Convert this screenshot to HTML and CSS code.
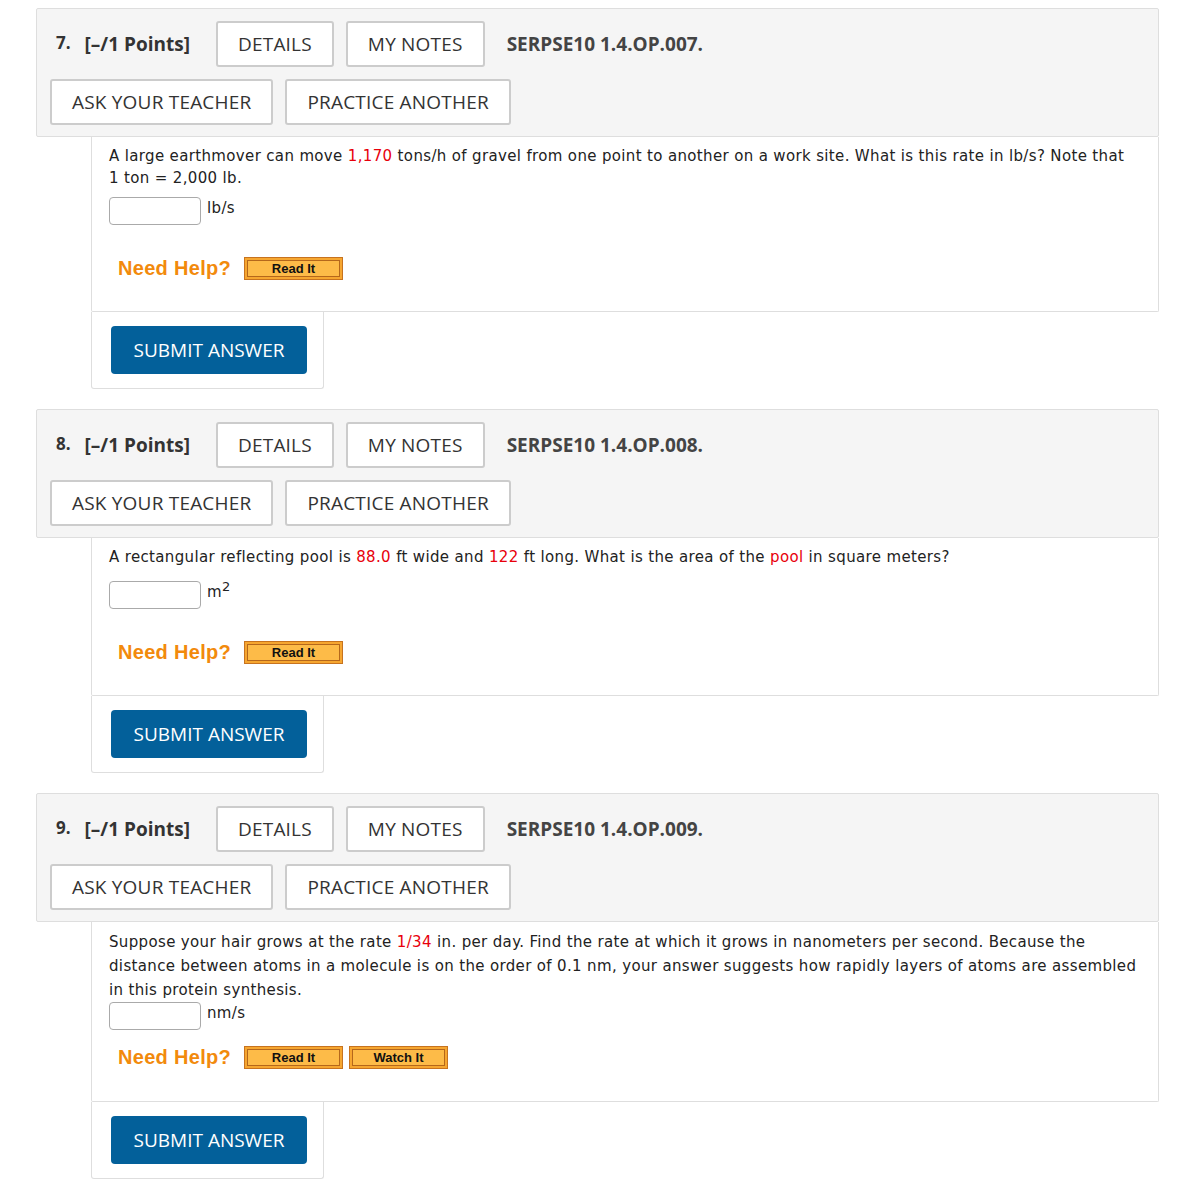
FILE: index.html
```html
<!DOCTYPE html>
<html lang="en">
<head>
  <meta charset="UTF-8" />
  <title>Assignment - Questions 7-9</title>
  <link rel="stylesheet" href="styles.css">
</head>
<body>
  <div class="page">

    <!-- Question 7 -->
    <div class="question">
      <div class="q-header">
        <div class="q-row">
          <span class="q-num">7.</span>
          <span class="q-points">[–/1 Points]</span>
          <button class="hdr-btn first">DETAILS</button>
          <button class="hdr-btn">MY NOTES</button>
          <span class="q-code">SERPSE10 1.4.OP.007.</span>
        </div>
        <div class="q-row">
          <button class="hdr-btn">ASK YOUR TEACHER</button>
          <button class="hdr-btn">PRACTICE ANOTHER</button>
        </div>
      </div>
      <div class="q-body">
        <p class="q-text">A large earthmover can move <span class="val">1,170</span> tons/h of gravel from one point to another on a work site. What is this rate in lb/s? Note that <span class="eq">1 ton = 2,000 lb.</span></p>
        <div class="answer">
          <input type="text" class="ans-input" />
          <span class="unit">lb/s</span>
        </div>
        <div class="help">
          <span class="need-help">Need Help?</span>
          <span class="help-btn"><span>Read It</span></span>
        </div>
      </div>
      <div class="q-submit">
        <button class="submit-btn">SUBMIT ANSWER</button>
      </div>
    </div>

    <!-- Question 8 -->
    <div class="question">
      <div class="q-header">
        <div class="q-row">
          <span class="q-num">8.</span>
          <span class="q-points">[–/1 Points]</span>
          <button class="hdr-btn first">DETAILS</button>
          <button class="hdr-btn">MY NOTES</button>
          <span class="q-code">SERPSE10 1.4.OP.008.</span>
        </div>
        <div class="q-row">
          <button class="hdr-btn">ASK YOUR TEACHER</button>
          <button class="hdr-btn">PRACTICE ANOTHER</button>
        </div>
      </div>
      <div class="q-body">
        <p class="q-text">A rectangular reflecting pool is <span class="val">88.0</span> ft wide and <span class="val">122</span> ft long. What is the area of the <span class="val">pool</span> in square meters?</p>
        <div class="answer with-sup">
          <input type="text" class="ans-input" />
          <span class="unit">m<sup>2</sup></span>
        </div>
        <div class="help">
          <span class="need-help">Need Help?</span>
          <span class="help-btn"><span>Read It</span></span>
        </div>
      </div>
      <div class="q-submit">
        <button class="submit-btn">SUBMIT ANSWER</button>
      </div>
    </div>

    <!-- Question 9 -->
    <div class="question">
      <div class="q-header">
        <div class="q-row">
          <span class="q-num">9.</span>
          <span class="q-points">[–/1 Points]</span>
          <button class="hdr-btn first">DETAILS</button>
          <button class="hdr-btn">MY NOTES</button>
          <span class="q-code">SERPSE10 1.4.OP.009.</span>
        </div>
        <div class="q-row">
          <button class="hdr-btn">ASK YOUR TEACHER</button>
          <button class="hdr-btn">PRACTICE ANOTHER</button>
        </div>
      </div>
      <div class="q-body last">
        <p class="q-text tall">Suppose your hair grows at the rate <span class="val">1/34</span> in. per day. Find the rate at which it grows in nanometers per second. Because the distance between atoms in a molecule is on the order of 0.1 nm, your answer suggests how rapidly layers of atoms are assembled in this protein synthesis.</p>
        <div class="answer">
          <input type="text" class="ans-input" />
          <span class="unit">nm/s</span>
        </div>
        <div class="help close">
          <span class="need-help">Need Help?</span>
          <span class="help-btn"><span>Read It</span></span>
          <span class="help-btn"><span>Watch It</span></span>
        </div>
      </div>
      <div class="q-submit">
        <button class="submit-btn">SUBMIT ANSWER</button>
      </div>
    </div>

  </div>
</body>
</html>
```

FILE: styles.css
```css
body {
  margin: 8px;
  background: #fff;
  font-family: "DejaVu Sans", Verdana, sans-serif;
  color: #222;
}

.page {
  padding-left: 28px;
  width: 1123px;
}

.question {
  margin-bottom: 20px;
}

/* header block */
.q-header {
  background: #f5f5f5;
  border: 1px solid #dedede;
  border-radius: 2px;
  padding: 12px 13px 11px 13px;
  display: flex;
  flex-direction: column;
  gap: 12px;
  font-family: "Open Sans", sans-serif;
}

.q-row {
  display: flex;
  align-items: center;
  gap: 12px;
}

.q-num {
  font-weight: 700;
  font-size: 17px;
  color: #333;
  margin-left: 6px;
  margin-right: 2px;
  position: relative;
  top: -2px;
}

.q-points {
  font-weight: 700;
  font-size: 19px;
  color: #333;
}

.hdr-btn {
  height: 46px;
  padding: 0 20px;
  background: #fff;
  border: 2px solid #ccc;
  border-radius: 3px;
  font-family: "Open Sans", sans-serif;
  font-size: 19px;
  letter-spacing: 0.2px;
  color: #333;
}

.hdr-btn.first {
  margin-left: 14px;
}

.q-code {
  font-weight: 700;
  font-size: 19px;
  color: #444;
  margin-left: 10px;
}

/* question body */
.q-body {
  margin-left: 55px;
  background: #fff;
  border: 1px solid #dedede;
  border-top: none;
  border-radius: 0 0 2px 2px;
  padding: 8px 17px 31px 17px;
}

.q-body.last {
  padding-bottom: 32px;
}

.q-text {
  margin: 0 0 8px 0;
  font-size: 15px;
  line-height: 22px;
  letter-spacing: 0.35px;
  color: #222;
}

.q-text.tall {
  line-height: 24px;
  margin-bottom: 0;
}

.eq {
  white-space: nowrap;
}

.val {
  color: #e8000b;
}

.answer {
  display: flex;
  align-items: flex-start;
  gap: 6px;
}

.answer.with-sup {
  margin-top: 13px;
}

.ans-input {
  width: 92px;
  height: 28px;
  box-sizing: border-box;
  border: 1px solid #aaa;
  border-radius: 4px;
  margin: 0;
}

.unit {
  font-size: 15px;
  line-height: 22px;
  letter-spacing: 0.35px;
  color: #222;
}

.unit sup {
  font-size: 13px;
  line-height: 0;
}

.help {
  display: flex;
  align-items: center;
  gap: 6px;
  margin-top: 32px;
  margin-left: 9px;
}

.help.close {
  margin-top: 16px;
}

.need-help {
  font-family: "Liberation Sans", Arial, sans-serif;
  font-weight: 700;
  font-size: 20px;
  letter-spacing: 0.3px;
  color: #f28a0c;
  margin-right: 7px;
}

.help-btn {
  display: inline-block;
  width: 99px;
  height: 23px;
  box-sizing: border-box;
  background: #f6a630;
  border: 1px solid #c7731f;
  padding: 2px;
}

.help-btn span {
  display: block;
  height: 100%;
  box-sizing: border-box;
  border: 1px solid #b5671b;
  background: #fdbb48;
  font-family: "Liberation Sans", Arial, sans-serif;
  font-weight: 700;
  font-size: 13px;
  line-height: 16px;
  text-align: center;
  color: #111;
}

/* submit */
.q-submit {
  margin-left: 55px;
  width: 233px;
  box-sizing: border-box;
  border: 1px solid #dedede;
  border-top: none;
  border-radius: 0 0 3px 3px;
  padding: 14px 16px 14px 19px;
  background: #fff;
}

.submit-btn {
  width: 196px;
  height: 48px;
  background: #03609a;
  color: #fff;
  border: none;
  border-radius: 4px;
  font-family: "Open Sans", sans-serif;
  font-size: 19px;
}
```
